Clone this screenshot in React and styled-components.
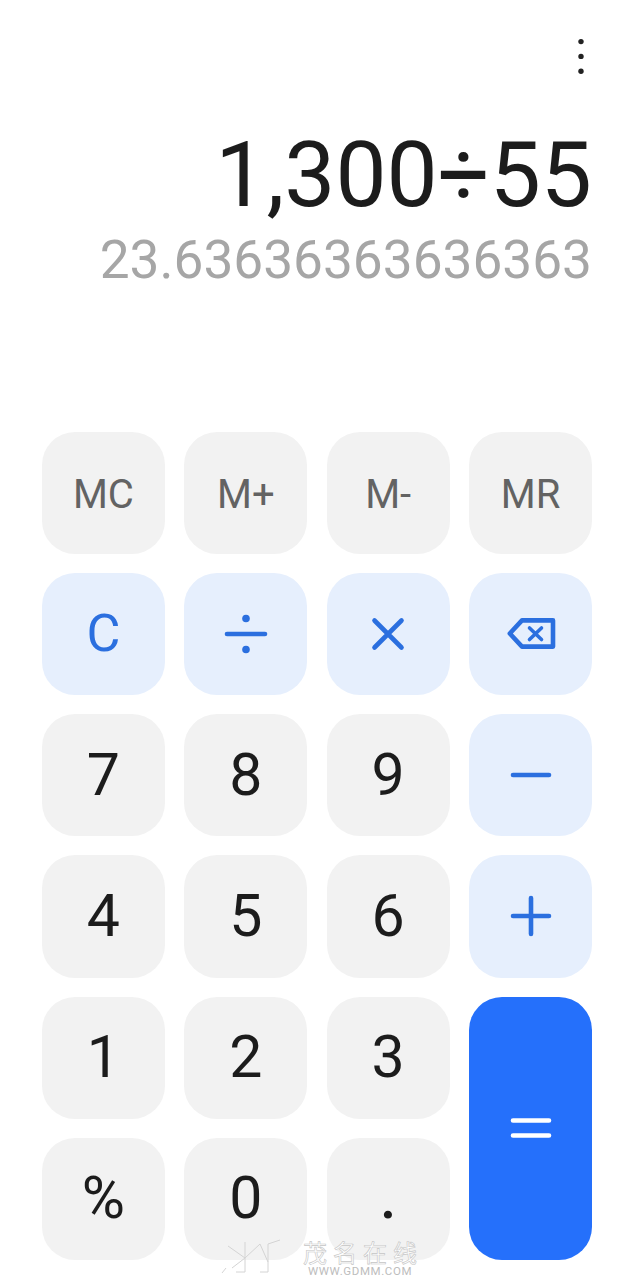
import React from "react";
import styled, { createGlobalStyle } from "styled-components";

const GlobalStyle = createGlobalStyle`
  html, body {
    margin: 0;
    padding: 0;
    background: #fff;
  }
  body {
    font-family: Roboto, "Liberation Sans", sans-serif;
  }
`;

const Page = styled.div`
  position: relative;
  width: 634px;
  height: 1280px;
  overflow: hidden;
  box-sizing: border-box;
  padding: 38px 42px 0;
  background: #fff;
`;

const TopBar = styled.div`
  display: flex;
  justify-content: flex-end;
  height: 38px;
  padding-right: 7px;
`;

const MoreDots = styled.svg`
  width: 8px;
  height: 38px;
  fill: #222;
`;

const Display = styled.div`
  height: 355.8px;
  padding-top: 54px;
  box-sizing: border-box;
  text-align: right;
`;

const Expression = styled.div`
  font-size: 91px;
  line-height: 90px;
  font-weight: 400;
  color: #1c1c1c;
  white-space: nowrap;
`;

const Result = styled.div`
  margin-top: 8px;
  font-size: 53.2px;
  line-height: 64px;
  font-weight: 400;
  color: #a6a6a6;
  white-space: nowrap;
`;

const Keypad = styled.div`
  display: grid;
  grid-template-columns: repeat(4, 122.8px);
  grid-auto-rows: 122.2px;
  column-gap: 19.6px;
  row-gap: 19px;
`;

const kinds = {
  memory: { bg: "#f2f2f2", fg: "#636363", size: "40px", pad: "4px 0 0" },
  digit: { bg: "#f2f2f2", fg: "#1c1c1c", size: "59px", pad: "0 0 2px" },
  op: { bg: "#e6effd", fg: "#2b6fdf", size: "52px", pad: "0" },
  equals: { bg: "#2570fb", fg: "#fff", size: "52px", pad: "0" },
};

const Key = styled.div`
  display: flex;
  align-items: center;
  justify-content: center;
  box-sizing: border-box;
  padding: ${(p) => kinds[p.$kind].pad};
  border-radius: 33px;
  background: ${(p) => kinds[p.$kind].bg};
  color: ${(p) => kinds[p.$kind].fg};
  font-size: ${(p) => kinds[p.$kind].size};
  grid-row: ${(p) => (p.$tall ? "span 2" : "auto")};
  line-height: 1;
`;

const Glyph = styled.svg`
  width: 52px;
  height: 52px;
  fill: none;
  stroke: currentColor;
  stroke-width: 4.6;
  stroke-linecap: round;
  stroke-linejoin: round;
`;

const DotFill = styled.circle`
  fill: currentColor;
  stroke: none;
`;

const DotKey = styled.span`
  font-size: 59px;
  font-weight: 500;
`;

const Watermark = styled.div`
  position: absolute;
  left: 220px;
  top: 1238px;
  display: flex;
  gap: 13px;
  pointer-events: none;
`;

const WatermarkLogo = styled.svg`
  width: 70px;
  height: 38px;
  fill: none;
  stroke: #d4d4d4;
  stroke-width: 1;
`;

const WatermarkText = styled.div`
  display: flex;
  flex-direction: column;
  align-items: center;
`;

const WatermarkTitle = styled.div`
  font-family: "Noto Sans CJK SC", sans-serif;
  font-size: 24px;
  line-height: 27px;
  letter-spacing: 6px;
  margin-right: -6px;
  color: #fff;
  -webkit-text-stroke: 0.6px #c4c4c4;
`;

const WatermarkUrl = styled.div`
  margin-top: 1px;
  font-size: 11.5px;
  line-height: 10px;
  letter-spacing: 0.6px;
  color: #bdbdbd;
`;

const Divide = () => (
  <Glyph viewBox="0 0 52 52">
    <path d="M7 26H45" />
    <DotFill cx="26" cy="10.5" r="3.8" />
    <DotFill cx="26" cy="41.5" r="3.8" />
  </Glyph>
);

const Times = () => (
  <Glyph viewBox="0 0 52 52">
    <path d="M12.5 12.5L39.5 39.5M39.5 12.5L12.5 39.5" />
  </Glyph>
);

const Backspace = () => (
  <Glyph viewBox="0 0 52 52">
    <path d="M17 12.4H48V38.6H17L4.8 25.5Z" />
    <path d="M24.5 20L36.5 31.5M36.5 20L24.5 31.5" strokeWidth="3.6" />
  </Glyph>
);

const Minus = () => (
  <Glyph viewBox="0 0 52 52">
    <path d="M8 26H44" />
  </Glyph>
);

const Plus = () => (
  <Glyph viewBox="0 0 52 52">
    <path d="M8 26H44M26 8V44" />
  </Glyph>
);

const Equals = () => (
  <Glyph viewBox="0 0 52 52">
    <path d="M8 18.5H44M8 33.5H44" />
  </Glyph>
);

const App = () => {
  return (
    <Page>
      <GlobalStyle />
      <TopBar>
        <MoreDots viewBox="0 0 8 38">
          <circle cx="4" cy="3.6" r="2.7" />
          <circle cx="4" cy="18.4" r="2.7" />
          <circle cx="4" cy="33.2" r="2.7" />
        </MoreDots>
      </TopBar>
      <Display>
        <Expression>1,300÷55</Expression>
        <Result>23.63636363636363</Result>
      </Display>
      <Keypad>
        <Key $kind="memory">MC</Key>
        <Key $kind="memory">M+</Key>
        <Key $kind="memory">M-</Key>
        <Key $kind="memory">MR</Key>
        <Key $kind="op">C</Key>
        <Key $kind="op"><Divide /></Key>
        <Key $kind="op"><Times /></Key>
        <Key $kind="op"><Backspace /></Key>
        <Key $kind="digit">7</Key>
        <Key $kind="digit">8</Key>
        <Key $kind="digit">9</Key>
        <Key $kind="op"><Minus /></Key>
        <Key $kind="digit">4</Key>
        <Key $kind="digit">5</Key>
        <Key $kind="digit">6</Key>
        <Key $kind="op"><Plus /></Key>
        <Key $kind="digit">1</Key>
        <Key $kind="digit">2</Key>
        <Key $kind="digit">3</Key>
        <Key $kind="equals" $tall><Equals /></Key>
        <Key $kind="digit">%</Key>
        <Key $kind="digit">0</Key>
        <Key $kind="digit"><DotKey>.</DotKey></Key>
      </Keypad>
      <Watermark>
        <WatermarkLogo viewBox="0 0 70 38">
          <path d="M8 8L25 20L40 6L48 24M25 4V34M25 20L12 30M48 6V34M40 34H48M16 34H25M48 6L60 2M2 35L6 30" />
        </WatermarkLogo>
        <WatermarkText>
          <WatermarkTitle>茂名在线</WatermarkTitle>
          <WatermarkUrl>WWW.GDMM.COM</WatermarkUrl>
        </WatermarkText>
      </Watermark>
    </Page>
  );
};

export default App;
